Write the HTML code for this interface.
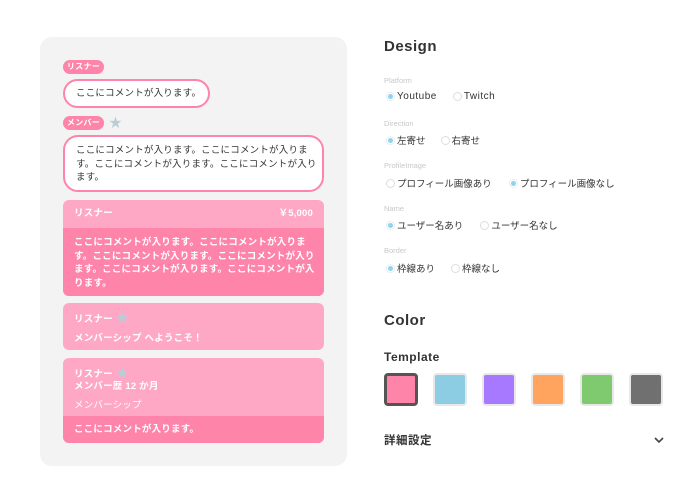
<!DOCTYPE html>
<html><head><meta charset="utf-8"><style>
*{margin:0;padding:0;box-sizing:border-box}
body{width:700px;height:490px;background:#fff;position:relative;overflow:hidden;font-family:"Liberation Sans","Noto Sans CJK JP",sans-serif;color:#333}
.a{position:absolute}
.panel{left:40px;top:37px;width:307px;height:429px;background:#f3f3f3;border-radius:12px}
.badge{background:#fe84aa;color:#fff;font-size:8px;font-weight:bold;border-radius:7px;height:14px;line-height:14px;width:41px;text-align:center;letter-spacing:0.3px}
.bub{border:2px solid #fe84aa;background:#fff;border-radius:15px;font-size:9.5px;color:#333;padding:0 0 0 11px;letter-spacing:0.2px}
.card{left:63px;width:261px;border-radius:6px;overflow:hidden;background:#ffa8c5;color:#fff;font-weight:bold;font-size:9.5px;letter-spacing:0.2px}
.card .b{background:#fe84aa}
.star{width:11px;height:11px;color:#b9cdd6;font-size:13px;line-height:11px}
h2{position:absolute;font-size:15px;font-weight:bold;color:#333;left:384px;letter-spacing:0.5px}
.lab{position:absolute;left:384px;font-size:7.5px;color:#c8c8c8}
.row{position:absolute;left:386px;font-size:9.5px;color:#333;display:flex;align-items:center;white-space:nowrap}
.r{width:9px;height:9px;border-radius:50%;border:1px solid #ddd;display:inline-block;margin-right:2px;position:relative}
.r.on::after{content:"";position:absolute;left:1px;top:1px;width:5px;height:5px;border-radius:50%;background:#8fd3ef}
.r.on{border-color:#e4eef3;background:#fff}
.sw{position:absolute;top:373px;width:34px;height:33px;border-radius:4px;border:2px solid #e8e8e8}
</style></head><body>
<div class="a panel"></div>
<div class="a badge" style="left:63px;top:60px">リスナー</div>
<div class="a bub" style="left:63px;top:79px;width:147px;height:29px;line-height:25px;white-space:nowrap">ここにコメントが入ります。</div>
<div class="a badge" style="left:63px;top:116px">メンバー</div>
<div class="a star" style="left:109px;top:117px">★</div>
<div class="a bub" style="left:63px;top:135px;width:261px;height:57px;line-height:13.5px;padding-top:7px;padding-right:0;white-space:nowrap;overflow:hidden">ここにコメントが入ります。ここにコメントが入りま<br>す。ここにコメントが入ります。ここにコメントが入り<br>ます。</div>

<div class="a card" style="top:200px;height:96px">
<div style="height:28px;line-height:28px;padding:0 11px;display:flex;justify-content:space-between"><span>リスナー</span><span>￥5,000</span></div>
<div class="b" style="height:68px;padding:8px 4px 0 11px;line-height:13.7px;white-space:nowrap">ここにコメントが入ります。ここにコメントが入りま<br>す。ここにコメントが入ります。ここにコメントが入り<br>ます。ここにコメントが入ります。ここにコメントが入<br>ります。</div>
</div>
<div class="a card" style="top:303px;height:47px">
<div style="position:absolute;left:11px;top:4px">リスナー <span style="color:#b9cdd6;font-size:13px">★</span></div>
<div style="position:absolute;left:11px;top:27px">メンバーシップ へようこそ！</div>
</div>
<div class="a card" style="top:358px;height:85px">
<div style="position:absolute;left:11px;top:4px">リスナー <span style="color:#b9cdd6;font-size:13px">★</span></div>
<div style="position:absolute;left:11px;top:20px">メンバー歴 12 か月</div>
<div style="position:absolute;left:11px;top:39px;font-weight:normal">メンバーシップ</div>
<div class="b" style="position:absolute;left:0;top:58px;width:261px;height:27px;line-height:27px;padding-left:11px">ここにコメントが入ります。</div>
</div>

<h2 style="top:38px">Design</h2>
<div class="lab" style="top:76px">Platform</div>
<div class="row" style="top:91px;font-size:10px;letter-spacing:0.5px"><span class="r on"></span>Youtube<span class="r" style="margin-left:16px"></span>Twitch</div>
<div class="lab" style="top:119px">Direction</div>
<div class="row" style="top:133px"><span class="r on"></span>左寄せ<span class="r" style="margin-left:15px"></span>右寄せ</div>
<div class="lab" style="top:161px">ProfileImage</div>
<div class="row" style="top:176px"><span class="r"></span>プロフィール画像あり<span class="r on" style="margin-left:17px"></span>プロフィール画像なし</div>
<div class="lab" style="top:204px">Name</div>
<div class="row" style="top:218px"><span class="r on"></span>ユーザー名あり<span class="r" style="margin-left:17px"></span>ユーザー名なし</div>
<div class="lab" style="top:246px">Border</div>
<div class="row" style="top:261px"><span class="r on"></span>枠線あり<span class="r" style="margin-left:16px"></span>枠線なし</div>

<h2 style="top:312px">Color</h2>
<div class="a" style="left:384px;top:350px;font-size:12px;font-weight:bold;color:#333;letter-spacing:0.5px">Template</div>
<div class="sw" style="left:384px;background:#fe84aa;border:3px solid #555"></div>
<div class="sw" style="left:433px;background:#8ccde3"></div>
<div class="sw" style="left:482px;background:#a779ff"></div>
<div class="sw" style="left:531px;background:#fea45f"></div>
<div class="sw" style="left:580px;background:#7fc96f"></div>
<div class="sw" style="left:629px;background:#707070"></div>
<div class="a" style="left:384px;top:432px;font-size:11.5px;font-weight:bold;color:#333;letter-spacing:0.5px">詳細設定</div>
<svg class="a" style="left:653px;top:435px" width="12" height="10"><path d="M2 3 L6 7 L10 3" fill="none" stroke="#444" stroke-width="1.6"/></svg>
</body></html>
